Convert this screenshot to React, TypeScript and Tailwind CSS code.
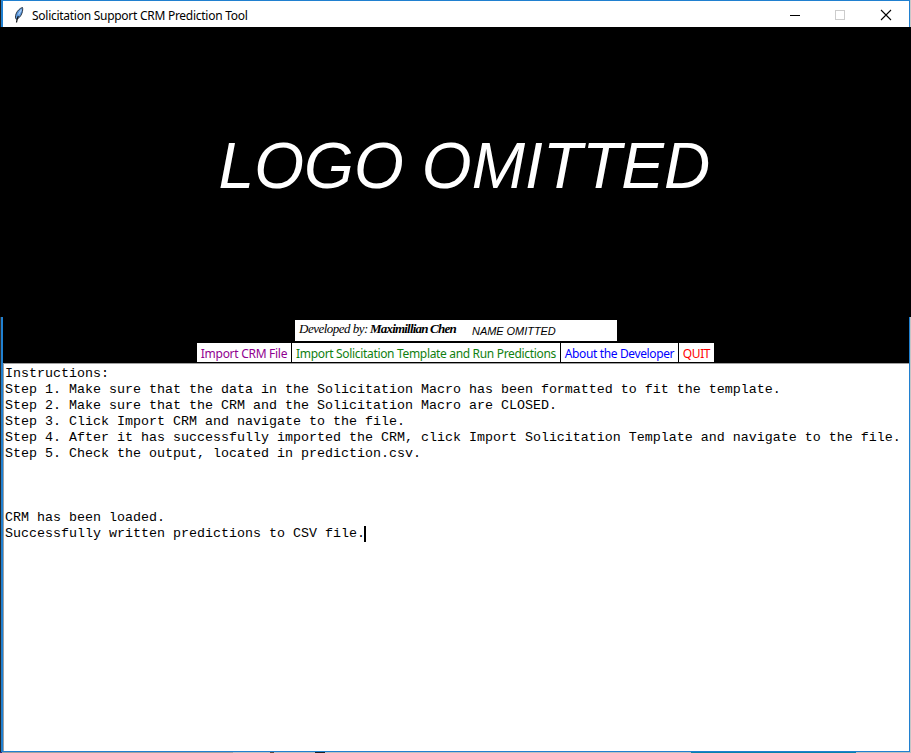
const instructions = `Instructions:
Step 1. Make sure that the data in the Solicitation Macro has been formatted to fit the template.
Step 2. Make sure that the CRM and the Solicitation Macro are CLOSED.
Step 3. Click Import CRM and navigate to the file.
Step 4. After it has successfully imported the CRM, click Import Solicitation Template and navigate to the file.
Step 5. Check the output, located in prediction.csv.



CRM has been loaded.
Successfully written predictions to CSV file.`;

function Feather() {
  return (
    <svg className="mt-[6px] ml-[11px] h-4 w-[10px] shrink-0" viewBox="0 0 10 16">
      <path d="M8.5.5C6 1 3 4 2 7c-.8 2.500-.7 4 .2 5.300C5 11.500 7 9 8 6c.7-2.200.9-4 .5-5.500Z" fill="#5d9be0" stroke="#202833" strokeWidth=".9" />
      <path d="M4.300 9C3.400 11 2.800 13 2.500 15.500" fill="none" stroke="#101418" strokeWidth="1.200" />
      <path d="M7.500 2.500 4.500 7.500" stroke="#b5d2f5" strokeWidth="1.200" />
    </svg>
  );
}

function TitleBar() {
  return (
    <header className="flex h-[27px] shrink-0 bg-[#202020] pl-px">
      <div className="flex flex-1 border-t border-r border-l-2 border-[#2080d0] bg-white">
        <Feather />
        <h1 className="mt-[6px] ml-[8px] flex-1 font-['Noto_Sans',sans-serif] text-[12px] leading-[17px] tracking-[-0.27px] whitespace-nowrap text-black">
          Solicitation Support CRM Prediction Tool
        </h1>
        <svg className="h-[26px] w-[140px] shrink-0" viewBox="0 0 140 26" fill="none" shapeRendering="crispEdges">
          <path d="M21 14.500h10" stroke="#000" />
          <rect x="66.500" y="9.500" width="9" height="9" stroke="#ccc" />
          <path d="m112 9 10 10m0-10-10 10" stroke="#000" strokeWidth="1.100" shapeRendering="auto" />
        </svg>
      </div>
      <div className="w-px bg-[#c8c8c8]" />
    </header>
  );
}

const button = "flex h-[19px] items-center justify-center bg-white pt-[2px] font-['Noto_Sans',sans-serif] text-[12px] leading-[17px] whitespace-nowrap";

export default function App() {
  return (
    <div className="flex h-[753px] w-[911px] flex-col overflow-hidden bg-[#bfbfbf]">
      <TitleBar />
      <section className="flex h-[290px] shrink-0 justify-center bg-black">
        <div className="mt-[103px] ml-[18px] font-['Liberation_Sans',sans-serif] text-[64px] leading-[72px] tracking-[0.1px] whitespace-nowrap text-white italic">LOGO OMITTED</div>
      </section>
      <main className="flex min-h-0 flex-1">
        <div className="w-px bg-[#292929]" />
        <div className="flex w-[909px] flex-col border-r border-b border-l-2 border-[#2080d0] bg-black">
          <div className="mt-[3px] ml-[292px] flex h-[21px] w-[322px] shrink-0 bg-white text-black italic">
            <span className="flex w-[177px] pl-[4px] font-['Liberation_Serif',serif] text-[13px] leading-[18px] whitespace-nowrap">
              <span className="w-[71px] tracking-[-0.5px]">Developed by: </span>
              <span className="font-bold tracking-[-0.8px]">Maximillian Chen</span>
            </span>
            <span className="font-['Liberation_Sans',sans-serif] text-[11px] leading-[23px] tracking-[-0.05px] whitespace-nowrap">NAME OMITTED</span>
          </div>
          <nav className="mt-[2px] ml-[194px] flex h-[19px] shrink-0 gap-px">
            <button className={button + " w-[94px] tracking-[-0.28px] text-[#900090]"}>Import CRM File</button>
            <button className={button + " w-[268px] tracking-[-0.33px] text-[#108010]"}>Import Solicitation Template and Run Predictions</button>
            <button className={button + " w-[117px] tracking-[-0.37px] text-[#0000ff]"}>About the Developer</button>
            <button className={button + " w-[35px] tracking-[-0.4px] text-[#ff0000]"}>QUIT</button>
          </nav>
          <div className="mt-px flex-1 border-t border-l border-[#a0a0a0] bg-white pt-[2px] pl-px">
            <pre className="font-['Liberation_Mono',monospace] text-[13.333px] leading-[16px] text-black">
              {instructions}<span className="-ml-px inline-block h-[16px] w-[2px] bg-black align-top" />
            </pre>
          </div>
        </div>
        <div className="w-px bg-[#c5c5c5]" />
      </main>
      <footer className="flex h-px shrink-0 bg-[#bfbfbf]">
        <div className="w-[2px] bg-[#302880]" />
        <div className="w-[231px] bg-[#a0a0a0]" />
        <div className="ml-[37px] w-[4px] bg-[#604838]" />
        <div className="ml-[41px] w-[10px] bg-[#202020]" />
        <div className="ml-[366px] w-[165px] bg-[#0882a8]" />
      </footer>
    </div>
  );
}
